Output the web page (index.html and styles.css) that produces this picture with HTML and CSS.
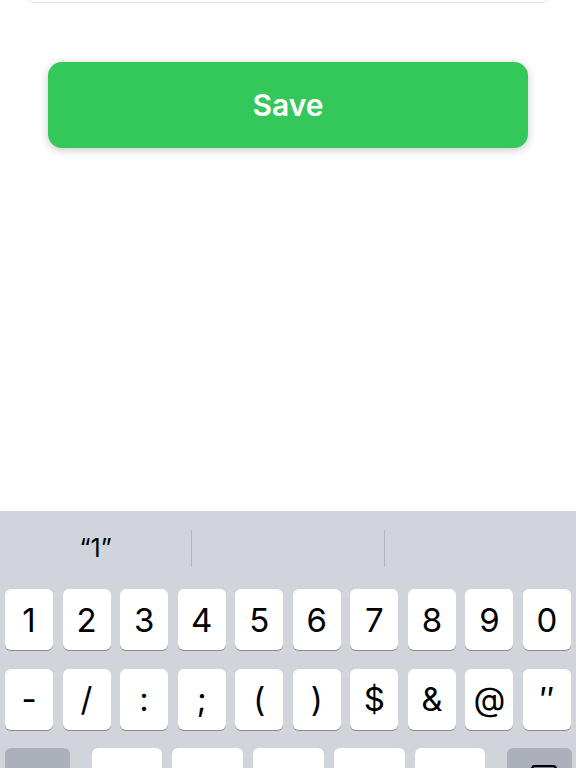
FILE: index.html
```html
<!DOCTYPE html>
<html>
<head>
  <title>Save</title>
  <link rel="stylesheet" href="styles.css">
</head>
<body>

  <div id="screen">
    <div class="field"></div>
    <button class="save-btn">Save</button>
  </div>

  <div id="keyboard">
    <div class="suggestions">
      <div class="suggestion">“1”</div>
      <div class="suggestion"></div>
      <div class="suggestion"></div>
    </div>

    <div class="key-row">
      <div class="key">1</div>
      <div class="key">2</div>
      <div class="key">3</div>
      <div class="key">4</div>
      <div class="key">5</div>
      <div class="key">6</div>
      <div class="key">7</div>
      <div class="key">8</div>
      <div class="key">9</div>
      <div class="key">0</div>
    </div>

    <div class="key-row">
      <div class="key">-</div>
      <div class="key">/</div>
      <div class="key">:</div>
      <div class="key">;</div>
      <div class="key">(</div>
      <div class="key">)</div>
      <div class="key">$</div>
      <div class="key">&amp;</div>
      <div class="key">@</div>
      <div class="key">″</div>
    </div>

    <!-- bottom row only peeks into view, labels sit below the fold -->
    <div class="key-row last">
      <div class="key gray"></div>
      <div class="punct">
        <div class="key"></div>
        <div class="key"></div>
        <div class="key"></div>
        <div class="key"></div>
        <div class="key"></div>
      </div>
      <div class="key gray">
        <svg class="del-icon" width="34" height="27" viewBox="0 0 34 27">
          <path d="M10.5 1.2 H30 a3 3 0 0 1 3 3 V22.8 a3 3 0 0 1 -3 3 H10.5 L1.2 13.5 Z" fill="none" stroke="#000" stroke-width="2.2" stroke-linejoin="round"/>
          <path d="M15 8.5 L25 18.5 M25 8.5 L15 18.5" stroke="#000" stroke-width="2.2" stroke-linecap="round"/>
        </svg>
      </div>
    </div>
  </div>

</body>
</html>
```

FILE: styles.css
```css
body {
  margin: 0;
  width: 576px;
  height: 768px;
  overflow: hidden;
  background-color: #ffffff;
  font-family: Inter, "Noto Sans", sans-serif;
}

#screen {
  height: 511px;
  display: flex;
  flex-direction: column;
  align-items: center;
}

.field {
  align-self: stretch;
  height: 40px;
  margin: -39px 26px 0;
  border: 1px solid #e2e2e4;
  border-radius: 8px;
}

.save-btn {
  margin-top: 59px;
  width: 480px;
  height: 86px;
  border: none;
  border-radius: 14px;
  background-color: #34c759;
  color: #ffffff;
  font-family: Inter, "Noto Sans", sans-serif;
  font-size: 30px;
  font-weight: 600;
  box-shadow: 0 2px 10px rgba(0,0,0,0.22);
}

/* keyboard */
#keyboard {
  height: 257px;
  overflow: hidden;
  background-color: #d1d4da;
}

.suggestions {
  height: 74px;
  display: flex;
  align-items: center;
}

.suggestion {
  width: 192px;
  text-align: center;
  font-size: 25px;
  color: #000;
}

.suggestion + .suggestion {
  border-left: 1px solid #b3b6bd;
  height: 37px;
}

.key-row {
  display: flex;
  gap: 9.5px;
  padding: 0 5px;
  margin-top: 4px;
}

.key-row + .key-row {
  margin-top: 18.5px;
}

.key {
  flex: 1;
  height: 61px;
  background: #ffffff;
  border-radius: 6px;
  box-shadow: 0 1px 0 #898a8d;
  display: flex;
  align-items: center;
  justify-content: center;
  font-size: 33px;
  color: #000;
}

.key-row.last {
  justify-content: space-between;
  padding: 0 4px 0 5px;
}

.key.gray {
  flex: 0 0 65px;
  background: #abb0ba;
}

.punct {
  display: flex;
  gap: 10px;
  width: 394px;
}

.del-icon {
  display: block;
}
```
